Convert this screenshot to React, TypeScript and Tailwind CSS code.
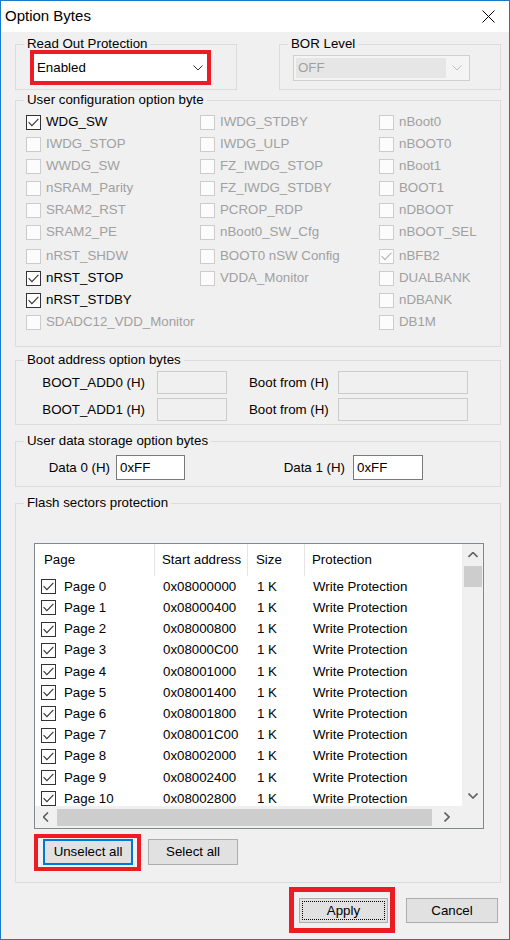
import React from 'react';

type Opt = { label: string; checked?: boolean; disabled?: boolean };

const leftOpts: Opt[] = [
  { label: 'WDG_SW', checked: true },
  { label: 'IWDG_STOP', disabled: true },
  { label: 'WWDG_SW', disabled: true },
  { label: 'nSRAM_Parity', disabled: true },
  { label: 'SRAM2_RST', disabled: true },
  { label: 'SRAM2_PE', disabled: true },
  { label: 'nRST_SHDW', disabled: true },
  { label: 'nRST_STOP', checked: true },
  { label: 'nRST_STDBY', checked: true },
  { label: 'SDADC12_VDD_Monitor', disabled: true },
];

const midOpts: Opt[] = [
  { label: 'IWDG_STDBY', disabled: true },
  { label: 'IWDG_ULP', disabled: true },
  { label: 'FZ_IWDG_STOP', disabled: true },
  { label: 'FZ_IWDG_STDBY', disabled: true },
  { label: 'PCROP_RDP', disabled: true },
  { label: 'nBoot0_SW_Cfg', disabled: true },
  { label: 'BOOT0 nSW Config', disabled: true },
  { label: 'VDDA_Monitor', disabled: true },
];

const rightOpts: Opt[] = [
  { label: 'nBoot0', disabled: true },
  { label: 'nBOOT0', disabled: true },
  { label: 'nBoot1', disabled: true },
  { label: 'BOOT1', disabled: true },
  { label: 'nDBOOT', disabled: true },
  { label: 'nBOOT_SEL', disabled: true },
  { label: 'nBFB2', checked: true, disabled: true },
  { label: 'DUALBANK', disabled: true },
  { label: 'nDBANK', disabled: true },
  { label: 'DB1M', disabled: true },
];

const pages = Array.from({ length: 11 }, (_, i) => ({
  name: `Page ${i}`,
  addr: '0x' + (0x08000000 + i * 0x400).toString(16).toUpperCase().padStart(8, '0'),
}));

function CheckMark({ color }: { color: string }) {
  return (
    <svg width="11" height="9" viewBox="0 0 11 9" fill="none">
      <path d="M0.6 4.2 L3.9 7.6 L10.4 0.8" stroke={color} strokeWidth="1.1" />
    </svg>
  );
}

function Box({ checked, disabled }: { checked?: boolean; disabled?: boolean }) {
  return (
    <span
      className={
        disabled
          ? 'flex h-[15px] w-[15px] shrink-0 items-center justify-center border border-[#cccccc] bg-[#fcfcfc]'
          : 'flex h-[15px] w-[15px] shrink-0 items-center justify-center border border-[#333333] bg-white'
      }
    >
      {checked && <CheckMark color={disabled ? '#b4b4b4' : '#333333'} />}
    </span>
  );
}

function Chevron({ dir, color }: { dir: 'up' | 'down' | 'left' | 'right'; color: string }) {
  const d = {
    down: 'M0.5 0.5 L5 5 L9.5 0.5',
    up: 'M0.5 5 L5 0.5 L9.5 5',
    left: 'M5 0.5 L0.5 5 L5 9.5',
    right: 'M0.5 0.5 L5 5 L0.5 9.5',
  }[dir];
  const vertical = dir === 'left' || dir === 'right';
  return (
    <svg width={vertical ? 6 : 10} height={vertical ? 10 : 6} viewBox={vertical ? '0 0 6 10' : '0 0 10 6'} fill="none">
      <path d={d} stroke={color} strokeWidth={dir === 'down' && color !== '#606060' ? 1 : 1.6} />
    </svg>
  );
}

function Group({ title, className, children }: { title: string; className?: string; children: React.ReactNode }) {
  return (
    <fieldset className={`border border-[#dcdcdc] ${className ?? ''}`}>
      <legend className="ml-[8px] px-[3px] leading-[14px]">{title}</legend>
      {children}
    </fieldset>
  );
}

function OptColumn({ items, className }: { items: Opt[]; className?: string }) {
  return (
    <div className={`flex flex-col ${className ?? ''}`}>
      {items.map((o, i) => (
        <div key={o.label} className={i === 6 ? 'mt-[2px] flex h-[22px] items-center' : 'flex h-[22px] items-center'}>
          <Box checked={o.checked} disabled={o.disabled} />
          <span className={o.disabled ? 'ml-[5px] leading-[16px] text-[#a0a0a0]' : 'ml-[5px] leading-[16px] text-black'}>
            {o.label}
          </span>
        </div>
      ))}
    </div>
  );
}

function WinButton({ label, className }: { label: string; className?: string }) {
  return (
    <div className={`flex items-center justify-center border border-[#adadad] bg-[#e1e1e1] ${className ?? ''}`}>
      {label}
    </div>
  );
}

export default function App() {
  return (
    <div className="flex h-[940px] w-[510px] flex-col border border-[#1979ca] bg-[#f0f0f0] font-['Liberation_Sans',Arial,sans-serif] text-[13.3px] text-black">
      {/* Title bar */}
      <div className="flex h-[31px] shrink-0 items-center justify-between bg-white pl-[4px] pr-[14px]">
        <span className="text-[15px]">Option Bytes</span>
        <svg width="13" height="13" viewBox="0 0 13 13">
          <path d="M0.5 0.5 L12.5 12.5 M12.5 0.5 L0.5 12.5" stroke="#000" strokeWidth="1" />
        </svg>
      </div>

      <div className="flex flex-1 flex-col pl-[14px] pr-[8px]">
        {/* Read out / BOR */}
        <div className="mt-[5px] flex justify-between">
          <Group title="Read Out Protection" className="w-[222px]">
            <div className="-mt-px ml-[14px] mb-[4px] flex h-[35px] w-[181px] border-4 border-[#ed1c24] bg-white">
              <div className="flex flex-1 items-center justify-between pl-[3px] pr-[4px]">
                <span>Enabled</span>
                <Chevron dir="down" color="#333333" />
              </div>
            </div>
          </Group>
          <Group title="BOR Level" className="w-[222px]">
            <div className="ml-[13px] mt-[4px] mb-[8px] flex h-[26px] w-[177px] border border-[#d0d0d0] bg-[#f4f4f4] p-[2px]">
              <div className="flex w-[150px] items-center bg-[#e6e6e6] pl-[2px] text-[#a0a0a0]">OFF</div>
              <div className="flex flex-1 items-center justify-center">
                <Chevron dir="down" color="#bdbdbd" />
              </div>
            </div>
          </Group>
        </div>

        {/* User configuration */}
        <Group title="User configuration option byte" className="mt-[3px]">
          <div className="flex items-start pl-[10px] pt-[4px] pb-[13px]">
            <OptColumn items={leftOpts} className="w-[174px]" />
            <OptColumn items={midOpts} className="w-[179px]" />
            <OptColumn items={rightOpts} className="flex-1" />
          </div>
        </Group>

        {/* Boot address */}
        <Group title="Boot address option bytes" className="mt-[6px]">
          <div className="flex flex-col gap-[4px] pt-[4px] pb-[3px]">
            {['BOOT_ADD0 (H)', 'BOOT_ADD1 (H)'].map((l) => (
              <div key={l} className="flex h-[23px] items-center">
                <span className="w-[129px] text-right">{l}</span>
                <div className="ml-[12px] h-[23px] w-[70px] border border-[#cccccc] bg-[#f0f0f0]" />
                <span className="ml-[22px] w-[89px]">Boot from (H)</span>
                <div className="h-[23px] w-[130px] border border-[#cccccc] bg-[#f0f0f0]" />
              </div>
            ))}
          </div>
        </Group>

        {/* User data */}
        <Group title="User data storage option bytes" className="mt-[9px]">
          <div className="flex items-center pt-[7px] pb-[6px]">
            <span className="w-[94px] text-right">Data 0 (H)</span>
            <div className="ml-[6px] flex h-[25px] w-[69px] items-center border border-[#7a7a7a] bg-white pl-[3px]">0xFF</div>
            <span className="w-[160px] text-right">Data 1 (H)</span>
            <div className="ml-[8px] flex h-[25px] w-[70px] items-center border border-[#7a7a7a] bg-white pl-[3px]">0xFF</div>
          </div>
        </Group>

        {/* Flash sectors */}
        <Group title="Flash sectors protection" className="mt-[9px]">
          <div className="flex flex-col pl-[18px] pt-[33px] pb-[11px]">
            <div className="flex h-[286px] w-[450px] flex-col border border-[#828790] bg-white">
              <div className="flex h-[262px]">
                <div className="w-[427px] overflow-hidden">
                  <div className="flex h-[32px] items-stretch">
                    <div className="flex w-[120px] items-center border-r border-[#e5e5e5] pl-[9px]">Page</div>
                    <div className="flex w-[93px] items-center border-r border-[#e5e5e5] pl-[7px]">Start address</div>
                    <div className="flex w-[57px] items-center border-r border-[#e5e5e5] pl-[8px]">Size</div>
                    <div className="flex flex-1 items-center pl-[7px]">Protection</div>
                  </div>
                  {pages.map((p) => (
                    <div key={p.name} className="flex h-[21.23px] items-center">
                      <div className="flex w-[120px] items-center pl-[6px]">
                        <Box checked />
                        <span className="ml-[8px]">{p.name}</span>
                      </div>
                      <div className="w-[93px] pl-[8px]">{p.addr}</div>
                      <div className="w-[57px] pl-[9px]">1 K</div>
                      <div className="flex-1 pl-[8px]">Write Protection</div>
                    </div>
                  ))}
                </div>
                <div className="flex w-[21px] flex-col items-center bg-[#f0f0f0]">
                  <div className="flex h-[22px] items-center justify-center">
                    <Chevron dir="up" color="#606060" />
                  </div>
                  <div className="h-[21px] w-[18px] bg-[#cdcdcd]" />
                  <div className="flex-1" />
                  <div className="flex h-[21px] items-center justify-center">
                    <Chevron dir="down" color="#606060" />
                  </div>
                </div>
              </div>
              <div className="flex flex-1 bg-[#f0f0f0]">
                <div className="flex w-[427px] items-center">
                  <div className="flex w-[22px] justify-center">
                    <Chevron dir="left" color="#606060" />
                  </div>
                  <div className="h-[17px] w-[375px] bg-[#cdcdcd]" />
                  <div className="flex flex-1 justify-center">
                    <Chevron dir="right" color="#606060" />
                  </div>
                </div>
              </div>
            </div>

            <div className="mt-[5px] flex items-start">
              <div className="h-[37px] w-[107px] border-4 border-[#ed1c24] pl-[5px] pt-px">
                <div className="flex h-[26px] w-[90px] items-center justify-center border-2 border-[#0078d7] bg-[#e1e1e1]">
                  Unselect all
                </div>
              </div>
              <WinButton label="Select all" className="ml-[7px] mt-[5px] h-[26px] w-[90px]" />
            </div>
          </div>
        </Group>

        {/* Apply / Cancel */}
        <div className="mt-[4px] flex items-start justify-end">
          <div className="h-[46px] w-[106px] border-[5px] border-[#ed1c24] pl-[5px] pt-[6px]">
            <div className="flex h-[25px] w-[89px] border border-[#adadad] bg-[#e1e1e1] p-[2px]">
              <div className="flex flex-1 items-center justify-center border border-dotted border-black">Apply</div>
            </div>
          </div>
          <WinButton label="Cancel" className="ml-[11px] mr-[3px] mt-[11px] h-[25px] w-[92px]" />
        </div>
      </div>
    </div>
  );
}
